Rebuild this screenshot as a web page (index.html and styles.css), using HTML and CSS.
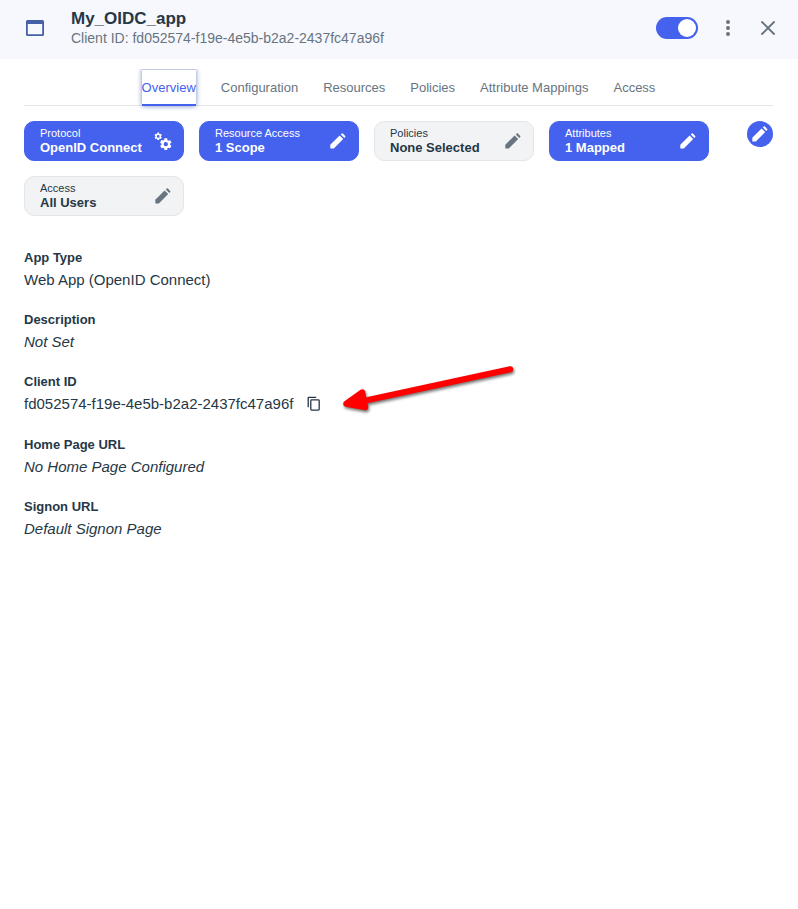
FILE: index.html
```html
<!DOCTYPE html>
<html lang="en">
<head>
<meta charset="utf-8">
<title>My_OIDC_app</title>
<link rel="stylesheet" href="styles.css">
</head>
<body>
<svg class="defs" width="0" height="0">
  <symbol id="pencil" viewBox="0 0 16 16"><path d="M.5 11.6 9.6 2.5 13.2 6.1 4.1 15.3Q3.8 15.6 3.4 15.6H.9Q.3 15.6.3 15V12.2Q.3 11.8.5 11.6ZM10.8 1.5 11.7.6Q12.3.1 12.9.6L15.2 2.9Q15.7 3.4 15.2 4L14.3 4.9Z"/></symbol>
  <symbol id="gear" viewBox="0 0 24 24"><path d="M19.14 12.94c.04-.3.06-.61.06-.94s-.02-.64-.07-.94l2.03-1.58a.49.49 0 0 0 .12-.61l-1.92-3.32a.49.49 0 0 0-.59-.22l-2.39.96a7 7 0 0 0-1.62-.94l-.36-2.54A.48.48 0 0 0 13.92 2h-3.84a.48.48 0 0 0-.48.41l-.36 2.54a7 7 0 0 0-1.62.94l-2.39-.96a.49.49 0 0 0-.59.22L2.72 8.87a.49.49 0 0 0 .12.61l2.03 1.58a6 6 0 0 0 0 1.88l-2.03 1.58a.49.49 0 0 0-.12.61l1.92 3.32c.12.22.37.29.59.22l2.39-.96a7 7 0 0 0 1.62.94l.36 2.54c.05.24.24.41.48.41h3.84c.24 0 .44-.17.48-.41l.36-2.54a7 7 0 0 0 1.62-.94l2.39.96c.22.08.47 0 .59-.22l1.92-3.32a.49.49 0 0 0-.12-.61zM12 15.6a3.6 3.6 0 1 1 0-7.2 3.6 3.6 0 0 1 0 7.2z"/></symbol>
</svg>
<header class="header">
  <svg class="window-icon" viewBox="0 0 18 16"><path fill-rule="evenodd" d="M1.5 0h15Q18 0 18 1.5v13Q18 16 16.5 16h-15Q0 16 0 14.5v-13Q0 0 1.5 0ZM1.8 4v10.2h14.4V4Z"/></svg>
  <div class="heading">
    <h1>My_OIDC_app</h1>
    <p>Client ID: fd052574-f19e-4e5b-b2a2-2437fc47a96f</p>
  </div>
  <div class="toggle"><span></span></div>
  <svg class="more" viewBox="0 0 4 16"><circle cx="2" cy="2" r="2"/><circle cx="2" cy="8" r="2"/><circle cx="2" cy="14" r="2"/></svg>
  <svg class="close" viewBox="0 0 14 14"><path d="M1 1l12 12M13 1 1 13"/></svg>
</header>
<main>
  <nav class="tabs">
    <a class="active">Overview</a><a>Configuration</a><a>Resources</a><a>Policies</a><a>Attribute Mappings</a><a>Access</a>
  </nav>
  <section class="summary">
    <div class="chips">
      <div class="chip filled"><div><span>Protocol</span><b>OpenID Connect</b></div><svg class="gears" viewBox="0 0 19 19"><use href="#gear" x="-.4" y="-.2" width="9.2" height="9.2"/><use href="#gear" x="4.6" y="5" width="14.4" height="14.4"/></svg></div>
      <div class="chip filled"><div><span>Resource Access</span><b>1 Scope</b></div><svg class="pencil"><use href="#pencil"/></svg></div>
      <div class="chip"><div><span>Policies</span><b>None Selected</b></div><svg class="pencil"><use href="#pencil"/></svg></div>
      <div class="chip filled"><div><span>Attributes</span><b>1 Mapped</b></div><svg class="pencil"><use href="#pencil"/></svg></div>
      <div class="chip"><div><span>Access</span><b>All Users</b></div><svg class="pencil"><use href="#pencil"/></svg></div>
    </div>
    <div class="edit"><svg class="pencil"><use href="#pencil"/></svg></div>
  </section>
  <dl class="details">
    <dt>App Type</dt><dd>Web App (OpenID Connect)</dd>
    <dt>Description</dt><dd class="unset">Not Set</dd>
    <dt>Client ID</dt>
    <dd class="client">fd052574-f19e-4e5b-b2a2-2437fc47a96f<svg class="copy" viewBox="0 0 14 16"><path d="M1.2 11.2V1.9Q1.2 1.4 1.7 1.4H9.2"/><rect x="3.8" y="3.9" width="8.4" height="10.2" rx=".8"/></svg></dd>
    <dt>Home Page URL</dt><dd class="unset">No Home Page Configured</dd>
    <dt>Signon URL</dt><dd class="unset">Default Signon Page</dd>
  </dl>
</main>
<svg class="arrow" viewBox="0 0 190 60"><path class="shaft" d="M28 41 170.3 10.2"/><path class="head" d="M6.2 44.8 22.3 33.3 25.3 48.2Z"/></svg>
</body>
</html>
```

FILE: styles.css
```css
* { box-sizing: border-box; }
body {
  margin: 0;
  min-height: 909px;
  background: #fff;
  color: #263746;
  font-family: "Liberation Sans", Arial, sans-serif;
}
h1, p, dl, dd { margin: 0; }
svg { display: block; flex: none; overflow: visible; }
.defs { position: absolute; }
.header {
  display: flex;
  align-items: center;
  height: 59px;
  padding: 0 23px 3px 26px;
  background: #f7f8fd;
}
.window-icon { width: 18px; height: 16px; fill: #4660a8; }
.heading { flex: 1; padding: 0 0 1px 27px; }
.heading h1 { font-size: 17px; line-height: 21px; }
.heading p { font-size: 14px; line-height: 18px; color: #68747f; }
.toggle {
  display: flex;
  justify-content: flex-end;
  width: 42px;
  height: 22px;
  padding: 2px;
  border-radius: 11px;
  background: #4462ed;
}
.toggle span { width: 18px; height: 18px; border-radius: 50%; background: #fff; }
.more { width: 4px; height: 16px; margin-left: 28px; fill: #68747f; }
.close { width: 14px; height: 14px; margin-left: 31px; fill: none; stroke: #68747f; stroke-width: 1.9; stroke-linecap: round; }
main { padding: 10px 25px 0 24px; }
.tabs {
  display: flex;
  justify-content: center;
  gap: 25px;
  height: 37px;
  border-bottom: 1px solid #e5e6e9;
  font-size: 13px;
  line-height: 37px;
  color: #68747f;
}
.tabs a { height: 37px; }
.tabs .active {
  color: #4462ed;
  box-shadow: inset 0 -2px #4462ed, inset 0 1px #c3cbe3, 0 0 5px rgba(70, 96, 168, .75);
  clip-path: inset(0 -6px -6px -6px);
}
.summary { display: flex; justify-content: space-between; padding-top: 15px; }
.chips { display: flex; flex-wrap: wrap; gap: 15px; width: 700px; }
.chip {
  display: flex;
  justify-content: space-between;
  align-items: center;
  width: 160px;
  height: 40px;
  padding: 0 12px 0 15px;
  border: 1px solid #e3e6e9;
  border-radius: 10px;
  background: #f1f3f4;
}
.chip.filled { border-color: #4462ed; background: #4462ed; color: #fff; }
.chip span, .chip b { display: block; white-space: nowrap; }
.chip span { font-size: 11px; line-height: 13px; }
.chip b { font-size: 13px; line-height: 15px; }
.pencil { width: 16px; height: 16px; fill: #68747f; }
.filled .pencil, .edit .pencil { fill: #fff; }
.gears { width: 19px; height: 19px; margin-right: -2px; fill: #fff; }
.edit {
  display: flex;
  align-items: center;
  justify-content: center;
  width: 26px;
  height: 26px;
  border-radius: 50%;
  background: #4462ed;
}
.details { padding-top: 32px; }
.details dt { font-size: 13px; font-weight: bold; line-height: 20px; }
.details dd { height: 24px; margin-bottom: 18.2px; font-size: 15px; line-height: 24px; }
.details .unset { font-style: italic; }
.details .client { display: flex; align-items: center; }
.copy { width: 14px; height: 16px; margin-left: 14px; fill: none; stroke: #263746; stroke-width: 1.3; }
.arrow {
  position: absolute;
  left: 340px;
  top: 359px;
  width: 190px;
  height: 60px;
  filter: drop-shadow(1.5px 2px 1.5px rgba(0, 0, 0, .55));
}
.shaft { fill: none; stroke: #f00; stroke-width: 6; stroke-linecap: round; }
.head { fill: #f00; stroke: #f00; stroke-width: 6; stroke-linejoin: round; }
```
